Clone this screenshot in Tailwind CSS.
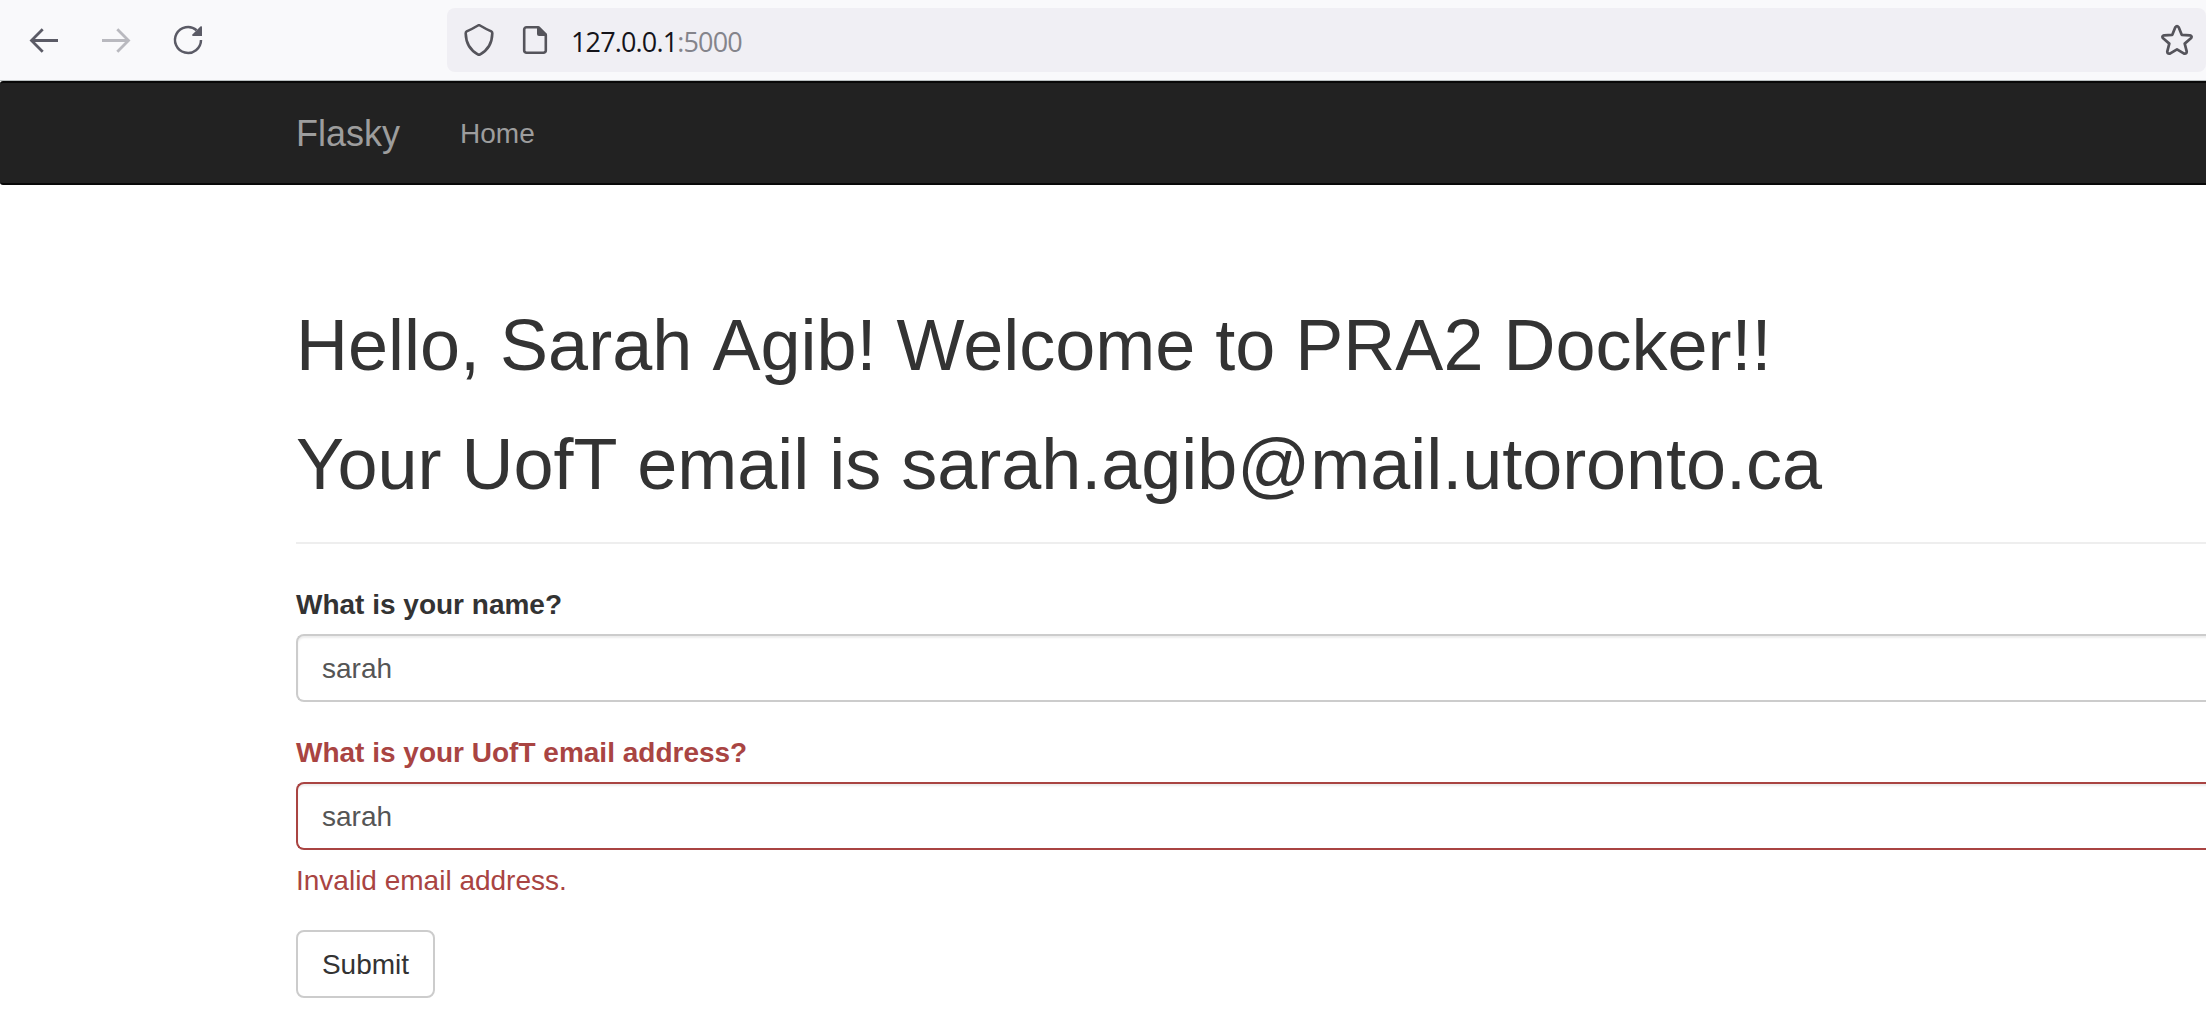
<!DOCTYPE html>
<html lang="en">
<head>
<meta charset="utf-8">
<title>Flasky</title>
<script src="https://cdn.jsdelivr.net/npm/@tailwindcss/browser@4"></script>
</head>
<body class="h-screen w-screen overflow-hidden bg-white font-['Liberation_Sans',Arial,sans-serif] text-[28px] leading-[40px] text-[#333333]">
  <!-- Browser toolbar -->
  <header class="flex h-[81px] items-start border-b border-[#b9bfc0] bg-[#f9f9fb] pt-2 pl-7">
    <div class="flex h-16 w-[419px] items-center gap-10 text-[#5b5b66]">
      <svg class="size-8" viewBox="0 0 32 32" fill="none" stroke="currentColor" stroke-width="2.8"><path d="M30 16.5H3.5M14.7 5.3 3.5 16.5l11.2 11.2"/></svg>
      <svg class="size-8 opacity-40" viewBox="0 0 32 32" fill="none" stroke="currentColor" stroke-width="2.8"><path d="M2 16.5h26.5M17.3 5.3l11.2 11.2-11.2 11.2"/></svg>
      <svg class="size-8" viewBox="0 0 32 32"><path d="M29 16A13 13 0 1 1 24.6 6.2" fill="none" stroke="currentColor" stroke-width="2.5"/><path d="M30 3.2v8.8H21a1 1 0 0 1-.6-1.6l8-8a1 1 0 0 1 1.6.8z" fill="currentColor"/></svg>
    </div>
    <div class="flex h-16 w-[1759px] items-center rounded-lg bg-[#f0eff4] pr-[13px] pl-4 text-[#55545b]">
      <svg class="size-8" viewBox="0 0 32 32" fill="none" stroke="currentColor" stroke-width="2.6" stroke-linejoin="round"><path d="M15 1.500Q16 .900 17 1.500 22.500 4.800 28.300 7.400 29.400 8 29.300 9.400C29.100 18 26 25.500 17.200 30.300Q16 31 14.800 30.300C6 25.500 2.900 18 2.700 9.400Q2.600 8 3.700 7.400 9.500 4.800 15 1.500z"/></svg>
      <svg class="ml-6 size-8" viewBox="0 0 32 32"><path d="M19 3.300H7.500A2.300 2.300 0 0 0 5.200 5.600V26.400A2.300 2.300 0 0 0 7.500 28.700H24.500A2.300 2.300 0 0 0 26.800 26.400V11z" fill="none" stroke="currentColor" stroke-width="2.600" stroke-linejoin="round"/><path d="M18 2.500h2.500L28 10v2H20a2 2 0 0 1-2-2z" fill="currentColor"/></svg>
      <div class="ml-5 flex-1 pt-1 font-['Open_Sans','Noto_Sans',sans-serif] text-[27px] tracking-[-0.85px] text-[#15141a] [font-kerning:none]">127.0.0.1<span class="text-[#84848b]">:5000</span></div>
      <svg class="size-8" viewBox="0 0 32 32" fill="none" stroke="currentColor" stroke-width="2.700" stroke-linejoin="round"><path d="M14.300 3.200Q16 .900 17.700 3.200L20.700 10.800 28.900 11.300Q31.700 12 29.900 14.300L23.700 19.600 25.700 27.300Q25.900 30.100 23.100 29.600L16 25.300 8.900 29.600Q6.100 30.100 6.300 27.300L8.300 19.600 2.100 14.300Q.300 12 3.100 11.300L11.300 10.800z"/></svg>
    </div>
  </header>

  <nav class="flex h-[104px] items-center gap-[60px] rounded-l-[3px] border-y-2 border-[#080808] bg-[#222222] pt-0.5 pl-[296px] text-[#9d9d9d]">
    <a class="text-[36px]">Flasky</a>
    <a>Home</a>
  </nav>

  <main class="ml-[296px] pt-[120.500px]">
    <div class="border-b-2 border-[#eeeeee] pb-[38px]">
      <h1 class="mb-10 text-[72px] leading-[79.200px]">Hello, Sarah <span class="ml-[0.2px]">Agib!</span> Welcome to PRA2 Docker!!</h1>
      <h1 class="text-[72px] leading-[79.200px]">Your UofT <span class="ml-px">email is </span><span class="tracking-[-0.03px]">sarah.agib@mail.utoronto.ca</span></h1>
    </div>
    <form class="pt-10">
      <div class="mb-[30px]">
        <label for="name" class="mb-[9px] block pt-px font-bold">What is your name?</label>
        <input id="name" type="text" value="sarah" class="block h-[68px] w-[calc(100%+8px)] rounded-l-lg border-y-2 border-l-2 border-[#cccccc] bg-white px-6 pt-0.5 text-[#555555] shadow-[inset_0_2px_2px_rgba(0,0,0,0.075)]">
      </div>
      <div class="mb-[29px] text-[#a94442]">
        <label for="email" class="mb-[9px] block pt-px font-bold">What is your UofT email address?</label>
        <input id="email" type="text" value="sarah" class="block h-[68px] w-[calc(100%+8px)] rounded-l-lg border-y-2 border-l-2 border-[#a94442] bg-white px-6 pt-0.5 text-[#555555] shadow-[inset_0_2px_2px_rgba(0,0,0,0.075)]">
        <p class="mt-[11px]">Invalid email address.</p>
      </div>
      <button type="button" class="block h-[68px] w-[139px] rounded-lg border-2 border-[#cccccc] bg-white pt-0.5 text-center">Submit</button>
    </form>
  </main>
</body>
</html>
